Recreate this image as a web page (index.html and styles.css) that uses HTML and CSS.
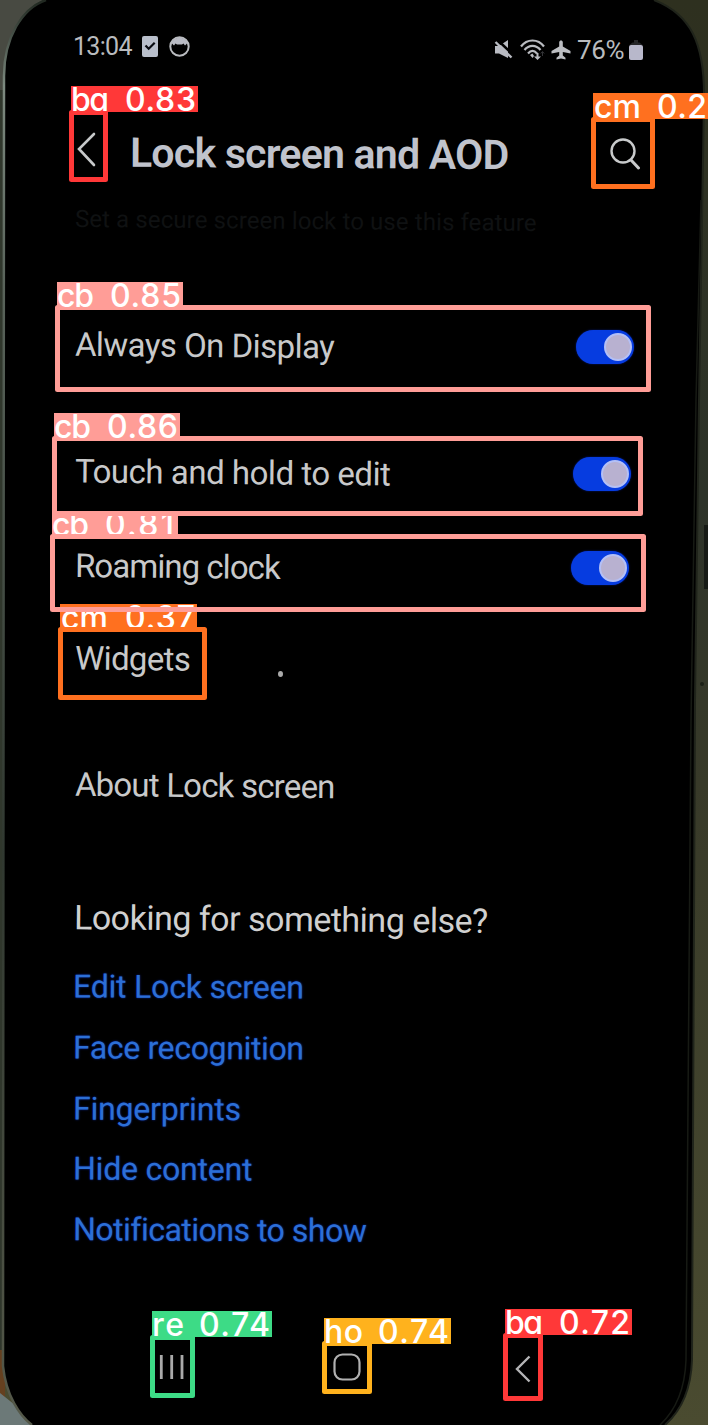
FILE: index.html
```html
<!DOCTYPE html>
<html lang="en">
<head>
<meta charset="utf-8">
<title>Lock screen and AOD</title>
<link rel="stylesheet" href="styles.css">
</head>
<body>
<div class="stage">
  <svg class="backdrop" viewBox="0 0 708 1425" aria-hidden="true">
    <defs>
      <linearGradient id="desk" x1="0" y1="0" x2="0" y2="1">
        <stop offset="0" stop-color="#2e301f"/><stop offset=".35" stop-color="#2d3329"/><stop offset=".55" stop-color="#383a29"/><stop offset="1" stop-color="#4a4b30"/>
      </linearGradient>
      <linearGradient id="rim" x1="0" y1="0" x2="0" y2="1">
        <stop offset="0" stop-color="#202820"/><stop offset=".06" stop-color="#7d8a80"/><stop offset=".2" stop-color="#59635a"/><stop offset=".6" stop-color="#303830"/><stop offset="1" stop-color="#55594a"/>
      </linearGradient>
    </defs>
    <rect width="708" height="1425" fill="url(#desk)"/>
    <path d="M0 0H60V90H0Z" fill="#484a42"/>
    <path d="M0 90H8V1350H0Z" fill="#30372c"/>
    <path d="M0 1350H5V1400H0Z" fill="#65401f"/>
    <path d="M0 1393L40 1425H0Z" fill="#6c7978"/>
    <rect x="704" y="525" width="4" height="64" fill="#171b16"/>
    <circle cx="702" cy="684" r="2" fill="#1b2016"/>
    <path d="M46 0C22 8 4 38 4 76L3 1366C6 1396 20 1416 32 1425H665C682 1410 691 1390 692 1360L695 700L699 400L704 100C705 42 690 14 654 0Z" fill="#000"/>
    <path class="edge" d="M46 0C22 8 4 38 4 76L3 1366C6 1396 20 1416 32 1425" stroke="url(#rim)" stroke-width="2.500"/>
    <path class="edge" d="M665 1425C682 1410 691 1390 692 1360L695 700L699 400L704 100C705 42 690 14 654 0" stroke="#20241b" stroke-width="2"/>
    <path class="edge" d="M660 1425C676 1410 685 1388 686 1360L691 720L696 400L701 200" stroke="#171a14" stroke-width="1.500"/>
  </svg>

  <main class="screen">
    <header class="status">
      <span class="clock">13:04</span>
      <svg class="st-task" width="16" height="21" viewBox="0 0 16 21"><rect width="16" height="21" rx="2" fill="#b9bfcb"/><path d="M3.500 9.500l3.200 3.300 6-6" fill="none" stroke="#080a10" stroke-width="2.200"/></svg>
      <svg class="st-face" width="21" height="21" viewBox="0 0 21 21"><circle cx="10.500" cy="10.500" r="9.200" fill="none" stroke="#b9bbbf" stroke-width="2"/><path d="M2.500 7C5 0 16 0 18.500 7L16 9.500l-1.500-2L13 8.500H8L6.500 7.500 5 9.500Z" fill="#b9bbc4"/></svg>
      <span class="grow"></span>
      <svg class="st-mute" width="19" height="20" viewBox="0 0 19 20"><path d="M1 6h4l9-6v18L5 13.500H1Z" fill="#b9bbc2"/><path d="M3-.5L19 14.500" stroke="#000" stroke-width="2.500"/><path d="M1.500 2L17.500 17.500" stroke="#b9bbc2" stroke-width="2.400"/></svg>
      <svg class="st-wifi" width="25" height="22" viewBox="0 0 25 22"><g fill="none" stroke="#b9bbc0" stroke-width="2.200"><path d="M1 7.500C7-.5 18-.5 24 7.500M4.500 11C9 5.500 16 5.500 20.500 11M8 14.500c3-3.500 6-3.500 9 0"/></g><path d="M10 16l2.500-1.500L14 17l-1.500 2ZM16.500 14h2v3.500h2.500L17.500 21 14 17.500h2.500Z" fill="#b9bbc0"/><path d="M22.500 17v-4M20.800 14.500l1.700-2 1.700 2" stroke="#343538" fill="none"/></svg>
      <svg class="st-plane" width="20" height="20" viewBox="0 0 20 20"><path d="M8.200 1.800Q10-1.500 11.800 1.800V6.500L19.500 11V13.500L11.800 12V15.500l2.700 2.200v1.800l-4.500-1-4.500 1V17.700l2.700-2.200V12L.5 13.500V11L8.200 6.500Z" fill="#bcbec2"/></svg>
      <span class="battery-level">76%</span>
      <svg class="st-battery" width="14" height="20" viewBox="0 0 14 20"><path d="M3.500 2.500h1.500V0h4v2.500h1.500l3 2.500H.5Z" fill="#252628"/><rect y="5" width="14" height="15" rx="2" fill="#b8b8cb"/></svg>
    </header>

    <div class="titlebar">
      <svg class="back" width="20" height="36" viewBox="0 0 20 36"><path d="M17 2L2 17l15 16" fill="none" stroke="#c7c9ca" stroke-width="2.600" stroke-linecap="round"/></svg>
      <h1 class="title">Lock screen and AOD</h1>
      <span class="grow"></span>
      <svg class="search" width="31" height="32" viewBox="0 0 31 32"><circle cx="13" cy="13" r="11.500" fill="none" stroke="#c8cacb" stroke-width="2.400"/><path d="M21 22l7.500 8" stroke="#c8cacb" stroke-width="3" stroke-linecap="round"/></svg>
    </div>
    <p class="note">Set a secure screen lock to use this feature</p>

    <section class="settings">
      <div class="row r-always"><span class="name">Always On Display</span><span class="switch"><i class="knob"></i></span></div>
      <div class="row r-touch"><span class="name">Touch and hold to edit</span><span class="switch"><i class="knob"></i></span></div>
      <div class="row r-roaming"><span class="name">Roaming clock</span><span class="switch"><i class="knob"></i></span></div>
      <div class="row r-widgets"><span class="name">Widgets</span><i class="speck"></i></div>
      <div class="row r-about"><span class="name">About Lock screen</span></div>
    </section>

    <section class="related">
      <h2 class="heading">Looking for something else?</h2>
      <a class="link l-edit">Edit Lock screen</a>
      <a class="link l-face">Face recognition</a>
      <a class="link l-finger">Fingerprints</a>
      <a class="link l-hide">Hide content</a>
      <a class="link l-notif">Notifications to show</a>
    </section>

    <nav class="navbar">
      <svg class="recents" width="26" height="26" viewBox="0 0 26 26"><path d="M2.300 1v24M12.700 1v24M23 1v24" stroke="#aaa" stroke-width="2.800"/></svg>
      <svg class="home" width="28" height="28" viewBox="0 0 28 28"><rect x="1.500" y="1.500" width="25" height="25" rx="8" fill="none" stroke="#b0b0b0" stroke-width="2.200"/></svg>
      <svg class="nav-back" width="16" height="28" viewBox="0 0 16 28"><path d="M14.500 1.500L2 14l12.500 12.500" fill="none" stroke="#b4b4b6" stroke-width="2.400"/></svg>
    </nav>
  </main>

  <svg class="detections" viewBox="0 0 708 1425">
    <g class="orange">
      <rect class="tag" x="60" y="604" width="137" height="26"/><text x="61" y="628.500" textLength="47">cm</text><text x="125" y="628.500" textLength="70">0.37</text>
      <rect class="box" x="60.500" y="629.500" width="144" height="68"/>
      <rect class="box" x="593.500" y="119.500" width="59" height="67"/>
      <rect class="tag" x="593" y="93" width="115" height="26"/><text x="594" y="117.500" textLength="47">cm</text><text x="657" y="117.500" textLength="50">0.2</text>
    </g>
    <g class="red">
      <rect class="box" x="71.500" y="112.500" width="34" height="67"/>
      <rect class="tag" x="71" y="86" width="127" height="26"/><text x="71" y="110.500" textLength="38">ba</text><text x="125" y="110.500" textLength="71">0.83</text>
      <rect class="box" x="505.500" y="1335.500" width="35" height="63"/>
      <rect class="tag" x="505" y="1309" width="127" height="26"/><text x="505" y="1333.500" textLength="38">ba</text><text x="559" y="1333.500" textLength="71">0.72</text>
    </g>
    <g class="amber">
      <rect class="box" x="324.500" y="1343.500" width="45" height="48"/>
      <rect class="tag" x="324" y="1318" width="127" height="26"/><text x="324" y="1342.500" textLength="39">ho</text><text x="378" y="1342.500" textLength="71">0.74</text>
    </g>
    <g class="green">
      <rect class="box" x="152.500" y="1337.500" width="40" height="58"/>
      <rect class="tag" x="152" y="1311" width="120" height="26"/><text x="152" y="1335.500" textLength="32">re</text><text x="199" y="1335.500" textLength="71">0.74</text>
    </g>
    <g class="pink">
      <rect class="tag" x="52" y="511" width="126" height="26"/><text x="52" y="535.500" textLength="37">cb</text><text x="105" y="535.500" textLength="69">0.81</text>
      <rect class="box" x="52.500" y="536.500" width="591" height="73"/>
      <rect class="box" x="57.500" y="307.500" width="591" height="82"/>
      <rect class="tag" x="57" y="282" width="126" height="26"/><text x="57" y="306.500" textLength="37">cb</text><text x="110" y="306.500" textLength="71">0.85</text>
      <rect class="box" x="54.500" y="438.500" width="586" height="75"/>
      <rect class="tag" x="54" y="413" width="126" height="26"/><text x="54" y="437.500" textLength="37">cb</text><text x="107" y="437.500" textLength="71">0.86</text>
    </g>
  </svg>
</div>
</body>
</html>
```
FILE: styles.css
```css
* { box-sizing: border-box; }
body { margin: 0; background: #000; }
.stage { position: relative; width: 708px; height: 1425px; overflow: hidden; font-family: Roboto, "Liberation Sans", sans-serif; color: #c8c9ca; }
.backdrop, .detections { position: absolute; inset: 0; width: 708px; height: 1425px; }
.backdrop .edge { fill: none; }
.screen { position: relative; display: flex; flex-direction: column; height: 1425px; padding: 17px 0 0 73px; }
.screen svg { flex: none; display: block; }
.grow { flex: 1; }
.status { display: flex; align-items: center; height: 60px; padding-right: 65px; color: #b9bbbe; white-space: nowrap; }
.clock { width: 69px; font-size: 25px; letter-spacing: -0.7px; margin-top: -2px; }
.st-task, .st-face { margin-top: -1px; }
.st-face { margin-left: 11px; }
.st-mute, .st-wifi, .st-plane, .battery-level, .st-battery { margin-top: 6px; }
.st-wifi { margin-left: 7px; }
.st-plane { margin-left: 6px; }
.battery-level { width: 49px; margin-left: 6px; font-size: 26px; letter-spacing: -0.3px; }
.st-battery { margin-left: 3px; }
.titlebar { display: flex; align-items: center; height: 60px; margin-top: 46px; padding: 0 67px 0 4px; }
.back { margin-top: -6px; }
.title { margin: 2px 0 0 33px; font-size: 41px; line-height: 60px; font-weight: 600; letter-spacing: -0.75px; white-space: nowrap; color: #c0c3cc; transform: rotate(.35deg); }
.search { margin-top: 2px; }
.note { margin: 21px 0 0 2px; height: 30px; line-height: 30px; font-size: 24px; letter-spacing: .1px; color: #0f1112; white-space: nowrap; transform: rotate(.5deg); transform-origin: left; }
.settings { display: flex; flex-direction: column; margin-top: 80px; }
.row { display: flex; align-items: center; height: 60px; font-size: 33px; white-space: nowrap; }
.name { margin-top: 2px; transform: rotate(.55deg); }
.switch { display: flex; justify-content: flex-end; align-items: center; width: 58px; height: 34px; padding-right: 2px; margin: 5px 0 0 auto; border-radius: 17px; background: #063ce0; box-shadow: 0 0 2px #061b80; }
.knob { width: 28px; height: 28px; border-radius: 50%; background: #b8b1d0; border: 2px solid #b4c0f6; }
.r-always { padding: 0 74px 0 2px; letter-spacing: -.55px; }
.r-touch { margin-top: 67px; padding: 0 77px 0 2px; letter-spacing: -.48px; }
.r-roaming { margin-top: 34px; padding: 0 79px 0 2px; letter-spacing: -.95px; }
.r-widgets { margin-top: 32px; padding-left: 2px; letter-spacing: -.65px; }
.speck { width: 5px; height: 6px; border-radius: 50%; margin: 34px 0 0 88px; background: #aaa; }
.r-about { margin-top: 67px; padding-left: 2px; letter-spacing: -.8px; }
.related { display: flex; flex-direction: column; align-items: flex-start; margin-top: 75px; white-space: nowrap; }
.heading { margin: 0 0 8px 1px; height: 60px; line-height: 60px; font-size: 34px; font-weight: 400; letter-spacing: -.5px; color: #d0d0d0; transform: rotate(.5deg); }
.link { height: 60.8px; line-height: 60.8px; font-size: 32px; color: #2c6fd6; text-shadow: 0 0 2px #0a2db0; transform: rotate(.3deg); }
.l-edit, .l-finger, .l-hide { letter-spacing: -.2px; }
.l-face { letter-spacing: -.35px; }
.l-notif { letter-spacing: -.5px; }
.navbar { display: flex; align-items: center; height: 60px; margin-top: 76px; padding-left: 86px; }
.home { margin-left: 148px; }
.nav-back { margin-left: 154px; margin-top: 4px; }
.detections text { font: 500 32px Inter, "Liberation Sans", sans-serif; font-feature-settings: "cv11" 1; fill: #fff; }
.box { fill: none; stroke-width: 5; stroke-linejoin: round; }
.orange .tag { fill: #ff701f; } .orange .box { stroke: #ff701f; }
.red .tag { fill: #ff3838; } .red .box { stroke: #ff3838; }
.amber .tag { fill: #ffb21d; } .amber .box { stroke: #ffb21d; }
.green .tag { fill: #3ddb86; } .green .box { stroke: #3ddb86; }
.pink .tag { fill: #ff9d97; } .pink .box { stroke: #ff9d97; }
```
